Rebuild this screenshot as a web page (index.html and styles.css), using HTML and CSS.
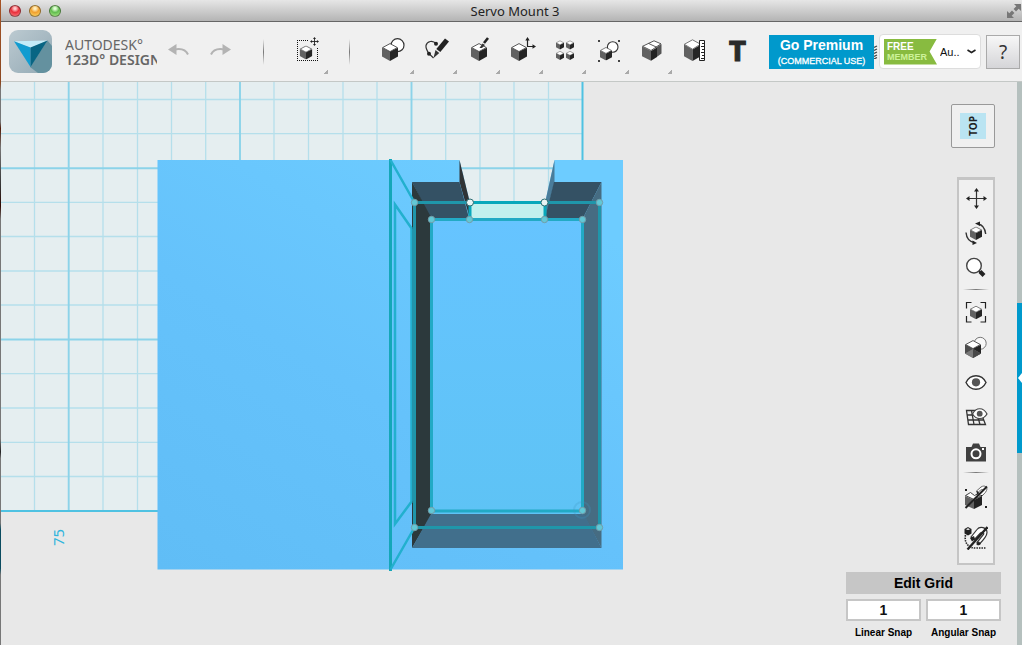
FILE: index.html
```html
<!DOCTYPE html>
<html lang="en">
<head>
<meta charset="utf-8">
<title>Servo Mount 3</title>
<link rel="stylesheet" href="styles.css">
</head>
<body>
<svg class="defs" width="0" height="0" aria-hidden="true">
  <symbol id="cube" viewBox="0 0 16 18">
    <path d="M0 4.7 8 8.6V18L0 13.6Z" fill="#616161"/>
    <path d="M16 4.7 8 8.6V18l8-4.4Z" fill="#252525"/>
    <path d="M8 .6 15.4 4.6 8 8.6.6 4.6Z" fill="#fff" stroke="#444" stroke-width=".9"/>
  </symbol>
  <symbol id="arrows" viewBox="0 0 24 24">
    <path d="M12 3v18M3 12h18" stroke="#222" stroke-width="2.400"/>
    <path d="M12 0l4 5.500h-8ZM12 24l4-5.500h-8ZM0 12l5.500-4v8ZM24 12l-5.500-4v8Z" fill="#222"/>
  </symbol>
  <linearGradient id="body" x1="0" y1="1" x2="0.700" y2="0">
    <stop offset="0" stop-color="#60bdf6"/><stop offset=".5" stop-color="#65c2fb"/><stop offset="1" stop-color="#6dccff"/>
  </linearGradient>
  <linearGradient id="floor" x1="0" y1="0" x2="0" y2="1">
    <stop offset="0" stop-color="#66c4ff"/><stop offset="1" stop-color="#5ec3f5"/>
  </linearGradient>
  <linearGradient id="tile" x1="0" y1="0" x2="1" y2="1">
    <stop offset="0" stop-color="#bccad1"/><stop offset="1" stop-color="#93a9b4"/>
  </linearGradient>
</svg>
<div class="window">
  <header class="titlebar">
    <div class="lights">
      <button class="light red" aria-label="Close"></button>
      <button class="light amber" aria-label="Minimize"></button>
      <button class="light green" aria-label="Zoom"></button>
    </div>
    <h1 class="title">Servo Mount 3</h1>
    <button class="fullscreen" aria-label="Full screen">
      <svg width="14" height="14" viewBox="0 0 14 14"><path d="M7 0h7v7l-2.300-2.300L9 7.400 6.600 5 9.300 2.300ZM0 14V7l2.300 2.300L5 6.600 7.400 9 4.700 11.700 7 14Z" fill="#777"/></svg>
    </button>
  </header>

  <nav class="toolbar">
    <svg class="logo" width="43" height="43" viewBox="0 0 43 43">
      <rect width="43" height="43" rx="9" fill="url(#tile)"/>
      <path d="M38.500 10.500 43 16v18a9 9 0 0 1-9 9h-5l-8-6Z" fill="#64919f"/>
      <path d="M5 11.300 38.500 10.500 21.500 18Z" fill="#c5ecf8"/>
      <path d="M5 11.300 21.500 17.500V37Z" fill="#129cd0"/>
      <path d="M38.500 10.500 21.500 17.500V37Z" fill="#086583"/>
    </svg>
    <div class="brand"><span class="maker">AUTODESK°</span><span class="product">123D° DESIGN</span></div>
    <div class="history">
      <button class="step" aria-label="Undo"><svg width="21" height="12" viewBox="0 0 21 12"><path d="M6 5.500c7-1.500 12 .5 14 5" fill="none" stroke="#b3b3b3" stroke-width="2"/><path d="M0 5.500 8.500 0v11Z" fill="#b3b3b3"/></svg></button>
      <button class="step" aria-label="Redo"><svg width="21" height="12" viewBox="0 0 21 12"><path d="M15 5.500c-7-1.500-12 .5-14 5" fill="none" stroke="#b3b3b3" stroke-width="2"/><path d="M21 5.500 12.500 0v11Z" fill="#b3b3b3"/></svg></button>
    </div>
    <span class="divider"></span>
    <button class="tool more" aria-label="Transform"><svg width="33" height="33" viewBox="0 0 33 33">
      <path d="M6 6.500H18M6.500 8V26M6 26.500H27M26.500 14V26" fill="none" stroke="#111" stroke-dasharray="1 1"/>
      <use href="#cube" x="8.500" y="11.500" width="13" height="14"/><use href="#arrows" x="19" y="3" width="9" height="9"/>
    </svg></button>
    <span class="divider"></span>
    <div class="tools">
      <button class="tool more" aria-label="Primitives"><svg width="33" height="33" viewBox="0 0 33 33">
        <circle cx="20.500" cy="11.200" r="6.500" fill="#fff" stroke="#333" stroke-width="1.200"/><use href="#cube" x="5" y="9" width="16" height="18"/>
      </svg></button>
      <button class="tool more" aria-label="Sketch"><svg width="33" height="33" viewBox="0 0 33 33">
        <path d="M16 9.700C13 6 7 7 6 11.500c-.5 3 1.500 6 3 8.200l4.500 4.300" fill="none" stroke="#333" stroke-width="1.200"/>
        <circle cx="16" cy="9.800" r="2" fill="#222"/><circle cx="9" cy="19.700" r="2" fill="#222"/>
        <path d="M25 4.500 29 7.500 20.300 18 16.300 15Z" fill="#222"/><path d="M15.500 16 19.300 19 13.500 24Z" fill="#333"/>
      </svg></button>
      <button class="tool more" aria-label="Construct"><svg width="33" height="33" viewBox="0 0 33 33">
        <use href="#cube" x="8" y="9" width="16" height="18"/><path d="m16.500 14 3-4.500 2.500 1.500-3 3Z" fill="#333"/><path d="m21 9 4-5" stroke="#222" stroke-width="2.600"/>
      </svg></button>
      <button class="tool more" aria-label="Modify"><svg width="33" height="33" viewBox="0 0 33 33">
        <use href="#cube" x="5" y="9" width="16" height="18"/><path d="M21.500 12.500V5M21 12.500h7" stroke="#222" stroke-width="1.200"/><path d="m21.500 3 2.200 3.500h-4.400ZM30 12.500l-3.500 2.200v-4.400Z" fill="#222"/>
      </svg></button>
      <button class="tool more" aria-label="Pattern"><svg width="33" height="33" viewBox="0 0 33 33">
        <use href="#cube" x="7" y="6" width="8" height="10"/><use href="#cube" x="17" y="6" width="8" height="10"/><use href="#cube" x="7" y="16.500" width="8" height="10"/><use href="#cube" x="17" y="16.500" width="8" height="10"/>
      </svg></button>
      <button class="tool more" aria-label="Grouping"><svg width="33" height="33" viewBox="0 0 33 33">
        <circle cx="20.700" cy="13" r="5.300" fill="#fff" stroke="#333" stroke-width="1.100"/><use href="#cube" x="8" y="13" width="12" height="13.500"/>
        <path d="M6 6h2v2H6ZM26 6h2v2h-2ZM6 26h2v2H6ZM26 26h2v2h-2Z" fill="#444"/>
      </svg></button>
      <button class="tool more" aria-label="Combine"><svg width="33" height="33" viewBox="0 0 33 33">
        <path d="M7 12.500 16 17v9.700l-9-4.500Z" fill="#616161"/><path d="m16 17 6-3.500v9.500l-6 3.700Z" fill="#222"/><path d="m22 13 4.500-3v9.500L22 22.800Z" fill="#555"/>
        <path d="M7.500 12.300 19 6.800l7 3-10 6.700Z" fill="#fff" stroke="#444" stroke-width=".9"/><path d="m13.500 9.400 8.500 4" stroke="#444" stroke-width=".9"/>
      </svg></button>
      <button class="tool" aria-label="Measure"><svg width="33" height="33" viewBox="0 0 33 33">
        <path d="M6 10.500 14.500 15.500V27L6 22.300Z" fill="#616161"/><path d="m14.500 15.500 7-4V23l-7 4Z" fill="#252525"/><path d="M6.300 10.300 14.500 5.800l8 4.400-8 5Z" fill="#fff" stroke="#555" stroke-width=".8"/>
        <path d="M21.500 6.500h5v20h-5Z" fill="#fff" stroke="#222"/><path d="M24 9.500h2M23 12.500h3M24 15.500h2M23 18.500h3M24 21.500h2M23 24.500h3" stroke="#222"/>
      </svg></button>
      <button class="tool text-tool" aria-label="Text">T</button>
    </div>
    <div class="account">
      <a class="premium" href="#"><strong>Go Premium</strong><span>(COMMERCIAL USE)</span></a>
      <svg class="grip" width="5" height="14" viewBox="0 0 5 14" aria-hidden="true"><path d="M0 2.500 3 1M0 5.500 3 4M0 8.500 3 7M0 11.500 3 10M0 14l3-1.500" stroke="#444" stroke-width="1.300"/></svg>
      <label class="member">
        <span class="badge"><b>FREE</b><b class="tier">MEMBER</b></span>
        <select class="user" aria-label="Account"><option>Au..</option></select>
      </label>
      <button class="help" aria-label="Help">?</button>
    </div>
  </nav>

  <main class="viewport">
    <svg class="scene" role="img" aria-label="Servo mount, top view">
      <g transform="translate(-1 -82)">
        <path d="M0 82H582.500V511H0Z" fill="#e5eef0"/>
        <path d="M34.500 82V511M103 82V511M137.500 82V511M171.500 82V511M205.700 82V511M274 82V511M308.500 82V511M343 82V511M377 82V511M445.700 82V511M480 82V511M514 82V511M548.500 82V511M0 99.500H582M0 133.700H582M0 202.300H582M0 236.500H582M0 271H582M0 305H582M0 373.700H582M0 408H582M0 442.300H582M0 476.500H582" stroke="#b5dfeb" stroke-width="1.300"/>
        <path d="M68.700 82V511M240 82V511M411.500 82V511M0 168.200H582M0 339.500H582" stroke="#8cd3e9" stroke-width="1.900"/>
        <path d="M582.500 82V511H0" fill="none" stroke="#4fc2e2" stroke-width="2"/>
        <text class="ruler" transform="translate(64 546) rotate(-90)">75</text>

        <path d="M157.500 160H459.500L470 203V219H545V203L554.500 160H623V569.500H157.500Z" fill="url(#body)"/>
        <path d="M470 203H545V219H470Z" fill="#c3f0ee"/>
        <path d="M459.500 160 470 203V219L459.500 182Z" fill="#303436"/>
        <path d="M554.500 160 545 203V219L554.500 182Z" fill="#4a7c9a"/>
        <path d="M412 182H459.500L469 218H430Z" fill="#345164"/>
        <path d="M554 182H601.500L583 218H545Z" fill="#345164"/>
        <path d="M412 182 432 219V514L412 548Z" fill="#2c393c"/>
        <path d="M601.500 182 583 218V514L601.500 548Z" fill="#466c82"/>
        <path d="M431 514H584L601.500 548H412Z" fill="#416f8c"/>
        <path d="M432 219H583V514H432Z" fill="url(#floor)"/>

        <g fill="none" stroke="#14a7b8">
          <path d="M390.500 159V571" stroke-width="3"/>
          <path d="M390.500 160 414.500 202.500M390.500 569.500 414.500 527.500M412 229 395 204.500V524L412 501M411.500 229V501" stroke="#22b0ce" stroke-width="2.500"/>
          <path d="M414.500 202.500H599.500V527.500H414.500Z" stroke="#1f96aa" stroke-width="3"/>
          <path d="M431.500 219.500H582.500V511H431.500Z" stroke="#22aac5" stroke-width="3"/>
          <path d="M470 202.500H545M470 203v16M545 203v16" stroke="#08a8bb" stroke-width="3"/>
          <circle cx="582" cy="510" r="8" stroke="#3f96c4" stroke-width="2" opacity=".25"/>
          <g class="points">
            <circle cx="414.500" cy="202.500" r="3.200"/><circle cx="599.500" cy="202.500" r="3.200"/>
            <circle cx="431.500" cy="219.500" r="3.200"/><circle cx="582.500" cy="219.500" r="3.200"/>
            <circle cx="469.500" cy="219.500" r="3.200"/><circle cx="544.500" cy="219.500" r="3.200"/>
            <circle cx="431.500" cy="510.500" r="3.200"/><circle cx="582.500" cy="510.500" r="3.200"/>
            <circle cx="414.500" cy="527.500" r="3.200"/><circle cx="599.500" cy="527.500" r="3.200"/>
            <circle class="open" cx="470" cy="202.500" r="3.500"/><circle class="open" cx="544.500" cy="202.500" r="3.500"/>
          </g>
        </g>
      </g>
    </svg>

    <aside class="dock">
      <button class="viewcube"><span>TOP</span></button>
      <div class="palette">
        <button class="nav" aria-label="Pan"><svg width="24" height="24"><path d="M12.500 4v17M4 12.500h17" stroke="#333" stroke-width="1.200"/><path d="m12.500 2 2.500 3.500h-5ZM12.500 23l2.500-3.500h-5ZM2 12.500 5.500 10v5ZM23 12.500 19.500 10v5Z" fill="#222"/></svg></button>
        <button class="nav" aria-label="Orbit"><svg width="24" height="24"><use href="#cube" x="6" y="5.500" width="12" height="13.500"/><path d="M14 3c4 .6 7 4.500 7.700 10M10 21.500C5.500 20.500 2.500 17 2 11.500" fill="none" stroke="#333" stroke-width="1.400"/><path d="m11 2.500 5-2v4.500ZM13 22l-4.500 2v-4.500Z" fill="#222"/></svg></button>
        <button class="nav" aria-label="Zoom"><svg width="24" height="24"><circle cx="10" cy="9.700" r="7.300" fill="#fff" stroke="#444" stroke-width="1.400"/><path d="m15 15 2 2" stroke="#333" stroke-width="2"/><path d="m16 15.500 4 4" stroke="#222" stroke-width="4"/></svg></button>
        <span class="rule"></span>
        <button class="nav" aria-label="Fit"><svg width="24" height="24"><path d="M2.500 7.500v-6h5M16.500 1.500h5v6M21.500 15v6h-5M7.500 21h-5v-6" fill="none" stroke="#222" stroke-width="1.200"/><use href="#cube" x="6" y="4.500" width="12" height="14"/></svg></button>
        <button class="nav" aria-label="Shading"><svg width="24" height="24"><circle cx="16.200" cy="7.300" r="6" fill="#f8f8f8" stroke="#777"/><use href="#cube" x="1" y="4" width="16" height="18"/><path d="m1 8.500 8 4.500-8 4.500Z" fill="#4c4c4c"/><path d="m1 17.500 8-4.500 8 4.500-8 4.500Z" fill="#7a7a7a"/><path d="m9 13 8 4.500-8 4.500Z" fill="#484848"/></svg></button>
        <button class="nav" aria-label="Visibility"><svg width="24" height="24"><path d="M2 11.500C6.500 2.500 17.500 2.500 22 11.500 17.500 20.500 6.500 20.500 2 11.500Z" fill="#fff" stroke="#333" stroke-width="1.400"/><circle cx="12" cy="11.300" r="4.100" fill="#555"/></svg></button>
        <button class="nav" aria-label="Grid visibility"><svg width="24" height="24"><path d="M2.500 4.500H16l5.500 14H4.500ZM3.500 9H18M4 14h16M7.500 4.500l2.500 14M12 4.500l4 14" fill="none" stroke="#333" stroke-width="1.300"/><path d="M8.500 8c3.500-7 11-7 14.500 0-3.500 6-11 6-14.500 0Z" fill="#fff" stroke="#444" stroke-width="1.200"/><circle cx="15.700" cy="7.700" r="2.900" fill="#555"/></svg></button>
        <button class="nav" aria-label="Screenshot"><svg width="24" height="24"><path d="M2 6h5.500l1.500-3.500h6L16.500 6H22v14.500H2Z" fill="#404040"/><circle cx="12" cy="12.800" r="4.500" fill="#404040" stroke="#fff" stroke-width="2"/><path d="M18 7h2v2h-2Z" fill="#fff"/></svg></button>
        <span class="rule short"></span>
        <button class="nav tall" aria-label="Snap off"><svg width="24" height="24" viewBox="0 0 24 24"><path d="m1 11 9 4v9l-9-4Z" fill="#606060"/><path d="m10 15 8-4v9l-8 4Z" fill="#222"/><path d="m1.500 10.500 5-3 4 3 4-2 3.500 2-8 4Z" fill="#fff" stroke="#444"/><path d="m12.500 6 4.500-4c4-2.500 7 .5 5.500 3.500-1 2.500-3.500 4.500-5.500 6l-2-2 3.500-3.500c1-1.500-.5-2-2-1l-2.500 2.500Z" fill="#fff" stroke="#666"/><path d="m12.500 5.500 2.500 2-2 2.500ZM16.500 10h2.500l-2 2ZM1 4h2v2H1ZM21 21h2v2h-2Z" fill="#222"/><path d="M1.500 23 23 1.500" stroke="#222" stroke-width="2"/></svg></button>
        <button class="nav tall" aria-label="Sketch snap off"><svg width="24" height="24" viewBox="0 0 24 24"><path d="M.5 3 4 1l3.500 2v4.500L4 9.500.5 7.500Z" fill="#222"/><path d="m2 3.200 2-1 2 1-2 .8Z" fill="#fff"/><path d="M1.500 9c-1.500 8 3 13.500 11 13H22" fill="none" stroke="#222" stroke-width="1.600" stroke-dasharray="1.500 1"/><path d="m7 11 6-7.500c3-4 10-2 10 3 0 4-5 9-8 12l-2-2 6.500-8c1-2-1.500-3-3-1.500l-6.500 7Z" fill="#fff" stroke="#333" stroke-width="1.200"/><path d="m6 12 4-2 1 3-3 2.500ZM12 18l3-2.500 2 2.500-3 1.500Z" fill="#222"/><path d="M3.500 23.500 23.500 1" stroke="#222" stroke-width="2.300"/></svg></button>
      </div>
      <div class="snap">
        <button class="edit-grid">Edit Grid</button>
        <div class="fields">
          <label class="field"><input value="1"><span>Linear Snap</span></label>
          <label class="field"><input value="1"><span>Angular Snap</span></label>
        </div>
      </div>
    </aside>
    <div class="edge">
      <button class="drawer" aria-label="Open panel"><svg width="5" height="10" viewBox="0 0 5 10"><path d="M5 0v10L1 5Z" fill="#fff"/></svg></button>
    </div>
  </main>
</div>
</body>
</html>
```
FILE: styles.css
```css
* { box-sizing: border-box; }

body {
  margin: 0;
  font-family: "Liberation Sans", Arial, sans-serif;
  color: #000;
  background: #e8e8e8;
}

button {
  padding: 0;
  border: 0;
  background: none;
  font: inherit;
  color: inherit;
}

svg { display: block; }
.defs { position: absolute; }

.window {
  display: flex;
  flex-direction: column;
  min-height: 100vh;
  border-left: 1px solid #777;
  border-image: linear-gradient(#a65325 0, #8b4720 13%, #777 14%, #777 19%, #511b08 20%, #777 23%, #333 29%, #300800 32%, #777 34%, #777 68%, #222 70%, #777 71%, #777 81%, #0b4c60 82%, #0b4c60 88%, #777 89%) 1;
}

/* Title bar */
.titlebar {
  display: grid;
  grid-template-columns: 1fr auto 1fr;
  align-items: center;
  height: 22px;
  padding: 0 1px 0 8px;
  border-bottom: 1px solid #666;
  border-radius: 5px 5px 0 0;
  background: linear-gradient(#e6e6e6, #b4b4b4);
}
.lights { display: flex; gap: 8px; }
.light {
  width: 12px;
  height: 12px;
  border-radius: 50%;
  border: 1px solid #0006;
}
.red { background: radial-gradient(circle at 50% 25%, #fcc 0 10%, #e8303c 45%, #ff8a8a); }
.amber { background: radial-gradient(circle at 50% 25%, #fff0c0 0 10%, #f0a030 45%, #ffe070); }
.green { background: radial-gradient(circle at 50% 25%, #e4ffd8 0 10%, #62bd50 45%, #b8f090); }
.title {
  margin: 0;
  font: 13px/20px "Noto Sans", sans-serif;
  color: #222;
}
.fullscreen { justify-self: end; }

/* Toolbar */
.toolbar {
  display: flex;
  align-items: center;
  height: 60px;
  padding: 0 2px 0 8px;
  border-bottom: 1px solid #c4c8c6;
  background: #f0f0f0;
}
.logo { flex: none; }
.brand {
  display: flex;
  flex-direction: column;
  flex: none;
  width: 92px;
  margin-left: 13px;
  overflow-x: clip;
  white-space: nowrap;
  font: 14px/15px "Noto Sans", sans-serif;
  color: #666;
}
.product { font-weight: 600; }
.history { display: flex; gap: 21px; margin-left: 11px; }
.step { padding-bottom: 4px; }
.divider {
  flex: none;
  width: 1px;
  height: 26px;
  margin: 0 22px 0 32px;
  background: linear-gradient(#f0f0f0, #777, #f0f0f0);
}
.tool + .divider { margin: 0 22px 0 20px; }
.tools { display: flex; }
.tool {
  flex: none;
  width: 43px;
  height: 51px;
  padding: 8px 5px 10px;
}
.more {
  background: linear-gradient(135deg, #0000 50%, #aaa 50%) no-repeat right 1px bottom 3px / 4px 4px;
}
.text-tool {
  font: 900 27px/36px Roboto, sans-serif;
  -webkit-text-stroke: 1px #2a2a2a;
  color: #2a2a2a;
}

/* Account area */
.account {
  display: flex;
  align-items: center;
  margin-left: auto;
}
.premium {
  display: flex;
  flex-direction: column;
  justify-content: center;
  width: 105px;
  height: 34px;
  background: #0099cc;
  color: #fff;
  text-align: center;
  text-decoration: none;
  white-space: nowrap;
  font-size: 9px;
  line-height: 14px;
}
.premium span { -webkit-text-stroke: 0.3px #fff; }
.premium strong { font-size: 14px; line-height: 18px; }
.member {
  display: flex;
  align-items: center;
  width: 102px;
  height: 35px;
  padding: 0 4px;
  border: 1px solid #ddd;
  border-radius: 4px;
  background: #fff;
}
.badge {
  display: flex;
  flex-direction: column;
  flex: none;
  width: 53px;
  padding: 2px 3px;
  background: #88bb40;
  clip-path: polygon(0 0, 100% 0, 86% 50%, 100% 100%, 0 100%);
  color: #fff;
  font-size: 10px;
  line-height: 11px;
}
.tier { color: #cdf29a; font-size: 9px; }
.user {
  flex: 1;
  min-width: 0;
  padding: 0 0 0 3px;
  border: 0;
  appearance: none;
  background: url("data:image/svg+xml,%3Csvg xmlns='http://www.w3.org/2000/svg' width='9' height='5'%3E%3Cpath d='M.5 1 4.500 3.500 8.500 1' fill='none' stroke='%23222' stroke-width='1.600'/%3E%3C/svg%3E") no-repeat right center;
  font: 11px/16px "Liberation Sans", sans-serif;
  color: #111;
}
.help {
  width: 34px;
  height: 34px;
  margin-left: 5px;
  border: 1px solid #aaa;
  background: linear-gradient(#f7f7f7, #d5d5d8);
  font: 19px/30px "Noto Sans", sans-serif;
  color: #333;
}

/* Viewport */
.viewport {
  display: grid;
  grid-template-columns: 1fr auto 5px;
  flex: 1;
}
.scene {
  grid-area: 1 / 1 / 2 / 3;
  width: 100%;
  height: 100%;
}
.ruler { font: 15px "Noto Sans", sans-serif; fill: #30b5dd; }
.points circle { fill: #62c8d6; stroke: #739da8; stroke-width: 1; }
.points .open { fill: #e8f4f4; stroke: #2c6c72; }

.dock {
  grid-area: 1 / 2 / 2 / 3;
  display: flex;
  flex-direction: column;
  align-items: flex-end;
  padding: 22px 16px 5px 0;
}
.viewcube {
  display: grid;
  place-items: center;
  width: 44px;
  height: 44px;
  margin-right: 6px;
  border: 1px solid #999;
  border-radius: 2px;
  background: #f0f0f0;
}
.viewcube span {
  display: grid;
  place-items: center;
  width: 26px;
  height: 26px;
  writing-mode: vertical-rl;
  rotate: 180deg;
  background: #bae4f2;
  font: bold 10px "Open Sans", sans-serif;
  color: #222;
}
.palette {
  display: flex;
  flex-direction: column;
  width: 38px;
  margin: 29px 6px 7px 0;
  padding-bottom: 5px;
  border: 2px solid #c5c5c5;
  border-top-width: 3px;
  background: #f0f0f0;
}
.nav {
  display: grid;
  place-items: center;
  height: 35px;
}
.tall { height: 41px; }
.rule {
  height: 1px;
  margin: 4px 4px 5px;
  background: linear-gradient(90deg, #f0f0f0, #777, #f0f0f0);
}
.short { margin: 2px 4px 3px; }

.snap {
  display: flex;
  flex-direction: column;
  gap: 5px;
  width: 155px;
}
.edit-grid {
  height: 22px;
  background: #c6c6c6;
  font-size: 14px;
  font-weight: bold;
}
.fields { display: flex; gap: 5px; }
.field {
  display: flex;
  flex-direction: column;
  flex: 1;
  min-width: 0;
  gap: 6px;
  text-align: center;
  white-space: nowrap;
  font-size: 10px;
  font-weight: bold;
  line-height: 12px;
}
.field input {
  width: 100%;
  height: 22px;
  padding: 0;
  border: 2px solid #c6c6c6;
  background: #fff;
  text-align: center;
  font: bold 14px "Liberation Sans", sans-serif;
  color: #111;
}

.edge {
  display: flex;
  flex-direction: column;
  padding-top: 221px;
  background: #b5c0be;
}
.drawer {
  display: grid;
  place-items: center;
  height: 150px;
  background: #0099cc;
}
```
